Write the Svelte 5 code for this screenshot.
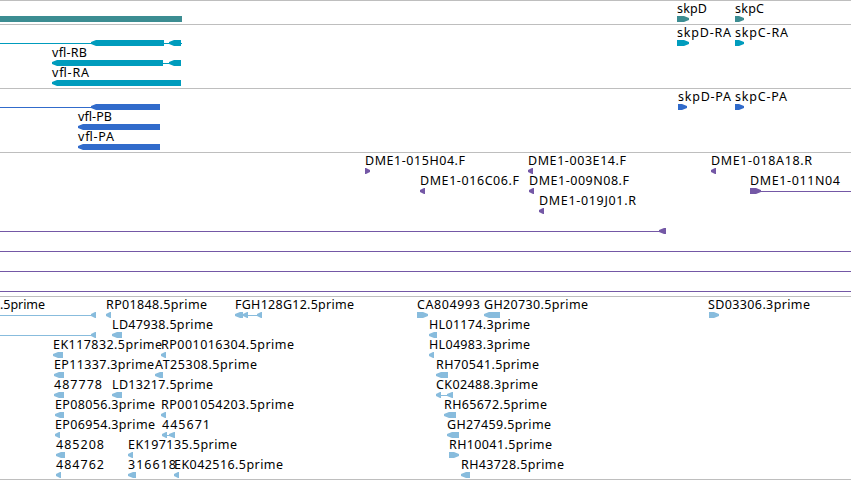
<script>
  // Segment: [start, end, direction]; direction -1 left, 1 right, 0 plain bar.
  // Feature: row, label, label start, label end, segments, connector lines.
  const tracks = [
    { h: 24, color: '#3c8d92', features: [
      [0, '', 0, 0, [[0, 182, 0]], []],
      [0, 'skpD', 677, 707, [[677, 689, 1]], []],
      [0, 'skpC', 735, 764, [[735, 744, 1]], []]
    ]},
    { h: 64, color: '#009cbd', features: [
      [0, '', 0, 0, [[91, 164, -1], [169, 181, -1]], [[0, 91], [164, 182]]],
      [1, 'vfl-RB', 52, 87, [[52, 163, -1], [169, 181, -1]], [[163, 169]]],
      [2, 'vfl-RA', 52, 89, [[52, 181, -1]], []],
      [0, 'skpD-RA', 677, 731, [[677, 689, 1]], []],
      [0, 'skpC-RA', 735, 788, [[735, 744, 1]], []]
    ]},
    { h: 64, color: '#316bcb', features: [
      [0, '', 0, 0, [[91, 160, -1]], [[0, 91]]],
      [1, 'vfl-PB', 78, 112, [[78, 160, -1]], []],
      [2, 'vfl-PA', 78, 114, [[78, 160, -1]], []],
      [0, 'skpD-PA', 678, 731, [[678, 687, 1]], []],
      [0, 'skpC-PA', 735, 787, [[735, 744, 1]], []]
    ]},
    { h: 144, color: '#7458a6', features: [
      [0, 'DME1-015H04.F', 365, 465, [[365, 370, 1]], []],
      [1, 'DME1-016C06.F', 420, 519, [[420, 425, -1]], []],
      [0, 'DME1-003E14.F', 528, 626, [[528, 533, -1]], []],
      [1, 'DME1-009N08.F', 529, 629, [[529, 534, -1]], []],
      [2, 'DME1-019J01.R', 539, 636, [[539, 544, -1]], []],
      [0, 'DME1-018A18.R', 711, 812, [[711, 716, -1]], []],
      [1, 'DME1-011N04', 750, 840, [[750, 761, 1]], [[760, 851]]],
      [3, '', 0, 0, [[659, 666, -1]], [[0, 660]]],
      [4, '', 0, 0, [], [[0, 851]]],
      [5, '', 0, 0, [], [[0, 851]]],
      [6, '', 0, 0, [], [[0, 851]]]
    ]},
    { h: 183, color: '#88bcdd', features: [
      [0, '.5prime', 0, 45, [[91, 96, -1]], [[0, 92]]],
      [1, '', 0, 0, [[91, 96, -1]], [[0, 92]]],
      [0, 'RP01848.5prime', 106, 207, [[106, 111, -1]], []],
      [1, 'LD47938.5prime', 112, 213, [[112, 122, -1]], []],
      [0, 'FGH128G12.5prime', 235, 354, [[235, 243, -1], [243, 248, -1], [257, 262, -1]], [[247, 258]]],
      [2, 'EK117832.5prime', 53, 162, [[53, 63, -1]], []],
      [2, 'RP001016304.5prime', 161, 294, [[161, 166, -1]], []],
      [3, 'EP11337.3prime', 54, 154, [[54, 64, -1]], []],
      [3, 'AT25308.5prime', 155, 257, [[155, 163, -1]], []],
      [4, '487778', 54, 102, [[54, 64, -1]], []],
      [4, 'LD13217.5prime', 112, 213, [[112, 122, -1]], []],
      [5, 'EP08056.3prime', 55, 155, [[55, 64, -1]], []],
      [5, 'RP001054203.5prime', 161, 294, [[161, 166, -1]], []],
      [6, 'EP06954.3prime', 55, 155, [[55, 60, -1]], []],
      [6, '445671', 162, 210, [[162, 167, -1], [169, 175, -1]], [[166, 170]]],
      [7, '485208', 56, 104, [[56, 65, -1]], []],
      [7, 'EK197135.5prime', 128, 237, [[128, 133, -1]], []],
      [8, '484762', 56, 104, [[56, 61, -1]], []],
      [8, '316618', 128, 176, [[128, 136, -1]], []],
      [8, 'EK042516.5prime', 174, 283, [[174, 179, -1]], []],
      [0, 'CA804993', 417, 480, [[417, 428, 1]], []],
      [0, 'GH20730.5prime', 484, 588, [[484, 500, -1]], []],
      [1, 'HL01174.3prime', 429, 530, [[429, 437, -1]], []],
      [2, 'HL04983.3prime', 429, 530, [[429, 434, -1]], []],
      [3, 'RH70541.5prime', 436, 539, [[436, 448, -1]], []],
      [4, 'CK02488.3prime', 436, 538, [[436, 441, -1], [447, 453, -1]], [[440, 448]]],
      [5, 'RH65672.5prime', 444, 547, [[444, 456, -1]], []],
      [6, 'GH27459.5prime', 447, 551, [[447, 459, -1]], []],
      [7, 'RH10041.5prime', 449, 552, [[449, 459, 1]], []],
      [8, 'RH43728.5prime', 461, 564, [[461, 470, -1]], []],
      [0, 'SD03306.3prime', 708, 810, [[709, 719, 1]], []]
    ]}
  ];

  function shape([a, b, dir], row) {
    const t = 15 + row * 20;
    if (dir === 0) return `M${a} ${t}H${b}V${t + 6}H${a}Z`;
    const head = Math.min(5, b - a - 1);
    if (dir < 0) return `M${a} ${t + 2}L${a + head} ${t}H${b}V${t + 6}H${a + head}L${a} ${t + 4}Z`;
    return `M${b} ${t + 2}L${b - head} ${t}H${a}V${t + 6}H${b - head}L${b} ${t + 4}Z`;
  }
</script>

<main>
  {#each tracks as track}
    <section>
      <svg width="851" height={track.h - 1} fill={track.color}>
        {#each track.features as [row, label, x1, x2, segments, lines]}
          {#each lines as [a, b]}
            <rect x={a} y={18 + row * 20} width={b - a} height="1" />
          {/each}
          {#each segments as seg}
            <path d={shape(seg, row)} />
          {/each}
          {#if label}
            <text x={x1} y={12 + row * 20} textLength={x2 - x1} lengthAdjust="spacing">{label}</text>
          {/if}
        {/each}
      </svg>
    </section>
  {/each}
</main>

<style>
  :global(body) {
    background: #fff;
  }
  main {
    width: 851px;
    height: 480px;
    box-sizing: border-box;
    border-bottom: 1px solid #bebebe;
  }
  section {
    border-top: 1px solid #bebebe;
  }
  svg {
    display: block;
    overflow: visible;
  }
  text {
    font: 12.5px 'Noto Sans', 'Open Sans', sans-serif;
    fill: #000;
  }
</style>
